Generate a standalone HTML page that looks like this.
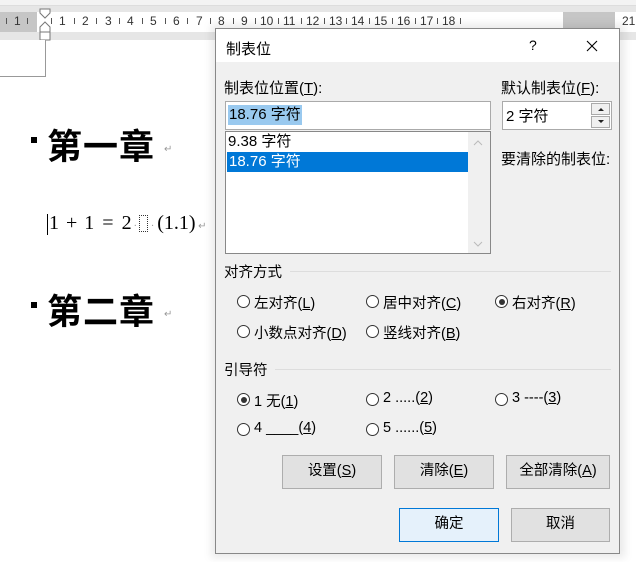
<!DOCTYPE html>
<html><head><meta charset="utf-8"><style>
*{box-sizing:border-box;margin:0;padding:0}
body{width:636px;height:562px;overflow:hidden;background:#fff;font-family:"Liberation Sans","Noto Sans CJK SC",sans-serif;position:relative;font-size:13px;color:#000}
.a{position:absolute}
.rl{font-size:12px;color:#333;top:14px;transform:translateX(2px)}
.tk{width:1px;height:6px;background:#555;top:18px;transform:translateX(2px)}
.lbl{font-size:14.5px;white-space:nowrap}
.radio{width:13px;height:13px;border:1px solid #333;border-radius:50%;background:#fff}
.radio.on::after{content:"";position:absolute;left:2.5px;top:2.5px;width:6px;height:6px;border-radius:50%;background:#333}
.btn{border:1px solid #adadad;background:#e1e1e1;font-size:14.5px;text-align:center;line-height:31px}
u{text-decoration:underline}
.h{font-size:35px;font-weight:bold;font-family:'Noto Sans CJK SC',sans-serif;line-height:40px;letter-spacing:1px}
</style></head><body>
<div class="a" style="left:0;top:0;width:636px;height:6px;background:#f3f3f3;border-bottom:1px solid #ddd"></div>
<div class="a" style="left:0;top:6px;width:636px;height:34px;background:#e6e6e6"></div>
<div class="a" style="left:0;top:12px;width:37px;height:20px;background:#c6c6c6"></div>
<div class="a" style="left:37px;top:12px;width:526px;height:20px;background:#fff"></div>
<div class="a" style="left:563px;top:12px;width:52px;height:20px;background:#c6c6c6"></div>
<div class="a" style="left:615px;top:12px;width:21px;height:20px;background:#fff"></div>
<div class="a rl" style="left:12px">1</div>
<div class="a tk" style="left:4px"></div><div class="a tk" style="left:25px"></div><div class="a tk" style="left:49px"></div>
<div class="a rl" style="left:57px">1</div><div class="a rl" style="left:80px">2</div><div class="a rl" style="left:103px">3</div><div class="a rl" style="left:125px">4</div><div class="a rl" style="left:148px">5</div><div class="a rl" style="left:171px">6</div><div class="a rl" style="left:194px">7</div><div class="a rl" style="left:216px">8</div><div class="a rl" style="left:239px">9</div><div class="a rl" style="left:258px">10</div><div class="a rl" style="left:281px">11</div><div class="a rl" style="left:304px">12</div><div class="a rl" style="left:327px">13</div><div class="a rl" style="left:349px">14</div><div class="a rl" style="left:372px">15</div><div class="a rl" style="left:395px">16</div><div class="a rl" style="left:418px">17</div><div class="a rl" style="left:440px">18</div><div class="a rl" style="left:620px">21</div>
<div class="a tk" style="left:72px"></div><div class="a tk" style="left:94px"></div><div class="a tk" style="left:117px"></div><div class="a tk" style="left:140px"></div><div class="a tk" style="left:163px"></div><div class="a tk" style="left:185px"></div><div class="a tk" style="left:208px"></div><div class="a tk" style="left:231px"></div><div class="a tk" style="left:253px"></div><div class="a tk" style="left:276px"></div><div class="a tk" style="left:299px"></div><div class="a tk" style="left:322px"></div><div class="a tk" style="left:344px"></div><div class="a tk" style="left:367px"></div><div class="a tk" style="left:390px"></div><div class="a tk" style="left:413px"></div><div class="a tk" style="left:435px"></div><div class="a tk" style="left:458px"></div>
<svg class="a" style="left:38px;top:8px" width="14" height="34"><path d="M2 1H12V5L7 10L2 5Z" fill="#fff" stroke="#777"/><path d="M7 14L12 19V24H2V19Z" fill="#fff" stroke="#777"/><rect x="2" y="24" width="10" height="8" fill="#fff" stroke="#777"/></svg>
<div class="a" style="left:0;top:40px;width:46px;height:37px;border-right:1px solid #999;border-bottom:1px solid #999;background:#fff"></div>

<div class="a" style="left:31px;top:137px;width:6px;height:6px;background:#000"></div>
<div class="a h" style="left:47px;top:125px">第一章</div>
<div class="a" style="left:164px;top:144px;font-size:10px;color:#999">↵</div>
<div class="a" style="left:47px;top:214px;width:1px;height:21px;background:#000"></div>
<div class="a" style="left:49px;top:212px;font-family:'Liberation Serif',serif;font-size:20px;white-space:nowrap">1<span style="padding:0 7px">+</span>1<span style="padding:0 8px">=</span>2<span style="font-size:10px;color:#999;padding:0 2px">·</span><span style="display:inline-block;width:9px;height:17px;border:1px dotted #333;vertical-align:-3px"></span><span style="font-size:10px;color:#999;padding:0 3px">·</span>(1.1)<span style="font-size:10px;color:#999"> ↵</span></div>
<div class="a" style="left:31px;top:302px;width:6px;height:6px;background:#000"></div>
<div class="a h" style="left:47px;top:290px">第二章</div>
<div class="a" style="left:164px;top:309px;font-size:10px;color:#999">↵</div>

<div class="a" style="left:211px;top:24px;width:414px;height:534px;background:rgba(0,0,0,0.08);filter:blur(4px)"></div>
<div class="a" style="left:215px;top:28px;width:405px;height:526px;background:#f0f0f0;border:1px solid #888">
<div class="a" style="left:0;top:0;width:403px;height:33px;background:#fff"></div>
<div class="a lbl" style="left:10px;top:9px;font-size:15px">制表位</div>
<div class="a" style="left:313px;top:8px;font-size:14px">?</div>
<svg class="a" style="left:370px;top:11px" width="12" height="12"><path d="M1 1L11 11M11 1L1 11" stroke="#000" stroke-width="1.1"/></svg>
<div class="a lbl" style="left:8px;top:48px;font-size:15px">制表位位置(<u>T</u>):</div>
<div class="a" style="left:9px;top:72px;width:266px;height:29px;background:#fff;border:1px solid #aaa"></div>
<div class="a" style="left:12px;top:76px;background:#99c9ef;font-size:15px;padding:0 1px;line-height:20px">18.76 字符</div>
<div class="a" style="left:9px;top:102px;width:266px;height:123px;background:#fff;border:1px solid #888"></div>
<div class="a" style="left:10px;top:103px;font-size:15px;line-height:20px;padding-left:2px">9.38 字符</div>
<div class="a" style="left:11px;top:123px;width:241px;height:20px;background:#0078d7;color:#fff;font-size:15px;line-height:20px;padding-left:2px">18.76 字符</div>
<div class="a" style="left:252px;top:103px;width:22px;height:121px;background:#f0f0f0"></div>
<svg class="a" style="left:256px;top:110px" width="12" height="110"><path d="M2 6L6 2L10 6" stroke="#bbb" fill="none"/><path d="M2 103L6 107L10 103" stroke="#bbb" fill="none"/></svg>
<div class="a lbl" style="left:285px;top:48px;font-size:15px">默认制表位(<u>F</u>):</div>
<div class="a" style="left:286px;top:72px;width:110px;height:29px;background:#fff;border:1px solid #aaa"></div>
<div class="a" style="left:290px;top:76px;font-size:15px">2 字符</div>
<div class="a" style="left:375px;top:74px;width:19px;height:12px;border:1px solid #aaa;background:#f0f0f0"></div>
<div class="a" style="left:375px;top:87px;width:19px;height:12px;border:1px solid #aaa;background:#f0f0f0"></div>
<svg class="a" style="left:381px;top:77px" width="8" height="20"><path d="M1 5L4 2L7 5Z M1 14L4 17L7 14Z" fill="#222"/></svg>
<div class="a lbl" style="left:285px;top:119px;font-size:15px">要清除的制表位:</div>

<div class="a lbl" style="left:8px;top:232px">对齐方式</div>
<div class="a" style="left:74px;top:242px;width:321px;height:1px;background:#ddd"></div>
<div class="a radio" style="left:21px;top:266px"></div><div class="a lbl" style="left:38px;top:263px">左对齐(<u>L</u>)</div>
<div class="a radio" style="left:150px;top:266px"></div><div class="a lbl" style="left:167px;top:263px">居中对齐(<u>C</u>)</div>
<div class="a radio on" style="left:279px;top:266px"></div><div class="a lbl" style="left:296px;top:263px">右对齐(<u>R</u>)</div>
<div class="a radio" style="left:21px;top:296px"></div><div class="a lbl" style="left:38px;top:293px">小数点对齐(<u>D</u>)</div>
<div class="a radio" style="left:150px;top:296px"></div><div class="a lbl" style="left:167px;top:293px">竖线对齐(<u>B</u>)</div>

<div class="a lbl" style="left:8px;top:330px">引导符</div>
<div class="a" style="left:59px;top:340px;width:336px;height:1px;background:#ddd"></div>
<div class="a radio on" style="left:21px;top:364px"></div><div class="a lbl" style="left:38px;top:361px">1 无(<u>1</u>)</div>
<div class="a radio" style="left:150px;top:364px"></div><div class="a lbl" style="left:167px;top:361px">2 .....(<u>2</u>)</div>
<div class="a radio" style="left:279px;top:364px"></div><div class="a lbl" style="left:296px;top:361px">3 ----(<u>3</u>)</div>
<div class="a radio" style="left:21px;top:394px"></div><div class="a lbl" style="left:38px;top:391px">4 ____(<u>4</u>)</div>
<div class="a radio" style="left:150px;top:394px"></div><div class="a lbl" style="left:167px;top:391px">5 ......(<u>5</u>)</div>

<div class="a btn" style="left:66px;top:426px;width:100px;height:34px">设置(<u>S</u>)</div>
<div class="a btn" style="left:178px;top:426px;width:100px;height:34px">清除(<u>E</u>)</div>
<div class="a btn" style="left:290px;top:426px;width:104px;height:34px">全部清除(<u>A</u>)</div>
<div class="a btn" style="left:183px;top:479px;width:100px;height:34px;border-color:#0078d7;background:#e5f1fb">确定</div>
<div class="a btn" style="left:295px;top:479px;width:99px;height:34px">取消</div>
</div>
</body></html>
